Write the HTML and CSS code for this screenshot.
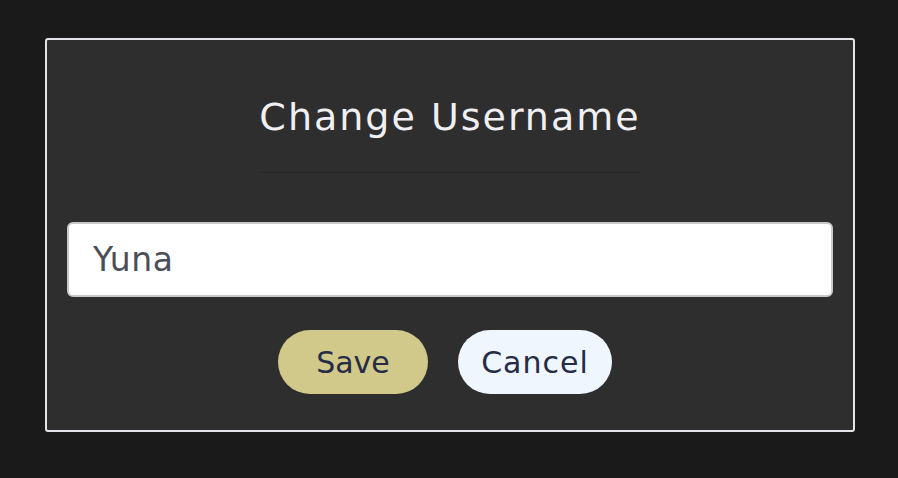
FILE: index.html
```html
<!DOCTYPE html>
<html lang="en">
<head>
<meta charset="utf-8">
<title>Change Username</title>
<link rel="stylesheet" href="styles.css">
</head>
<body>
<div class="dialog">
  <h2 class="title">Change Username</h2>
  <hr class="divider">
  <input class="field" type="text" value="Yuna">
  <div class="actions">
    <button class="btn btn-save">Save</button>
    <button class="btn btn-cancel">Cancel</button>
  </div>
</div>
</body>
</html>
```
FILE: styles.css
```css
html, body {
  margin: 0;
  padding: 0;
  background: #1a1a1a;
}
body {
  font-family: "DejaVu Sans", "Open Sans", sans-serif;
  padding: 38px 43px 0 45px;
}
.dialog {
  width: 766px;
  height: 390px;
  background: #2e2e2e;
  border: 2px solid #e3e3e8;
  border-radius: 3px;
  padding: 0 20px;
  display: flex;
  flex-direction: column;
  align-items: center;
}
.title {
  margin: 52px 0 0;
  font-size: 38px;
  line-height: 50px;
  font-weight: normal;
  letter-spacing: 2px;
  color: #f0f0f4;
}
.divider {
  width: 380px;
  margin: 30px 0 0;
  border: 0;
  height: 1px;
  background: #252525;
}
.field {
  box-sizing: border-box;
  width: 766px;
  height: 75px;
  margin-top: 49px;
  padding: 0 24px;
  border: 2px solid #c9c9cc;
  border-radius: 6px;
  background: #fff;
  font-family: inherit;
  font-size: 33px;
  letter-spacing: 0.5px;
  color: #4a4f57;
  outline: none;
}
.actions {
  display: flex;
  gap: 30px;
  margin-top: 33px;
  margin-right: 10px;
}
.btn {
  height: 64px;
  border: 0;
  border-radius: 32px;
  padding: 0;
  font-family: inherit;
  font-size: 30px;
  color: #262c45;
  text-align: center;
}
.btn-save {
  width: 150px;
  background: #d0c98a;
}
.btn-cancel {
  width: 154px;
  background: #eff6fd;
  letter-spacing: 1px;
}
```
